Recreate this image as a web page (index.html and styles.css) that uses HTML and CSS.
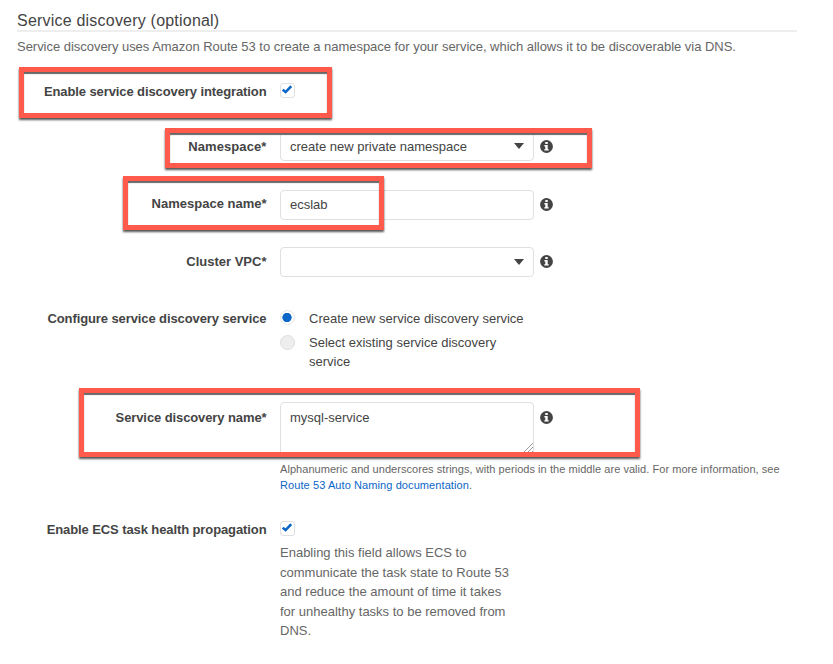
FILE: index.html
```html
<!DOCTYPE html>
<html lang="en">
<head>
<meta charset="utf-8">
<title>Service discovery</title>
<link rel="stylesheet" href="styles.css">
</head>
<body>
<svg class="defs" width="0" height="0" aria-hidden="true">
  <symbol id="info" viewBox="0 0 13 13"><circle cx="6.5" cy="6.5" r="6.4" fill="#444"/><path d="M5.3 2h2.4v2H5.3zM4.4 5.1h3.3v4.1h1v1.4H4.3V9.2h1V6.5h-.9z" fill="#fff"/></symbol>
  <symbol id="check" viewBox="0 0 10 9"><path d="M.7 4.7 3.6 7 9.2 1.2" fill="none" stroke="#0b66c8" stroke-width="2.5"/></symbol>
</svg>
<main class="panel">
  <h2 class="title">Service discovery (optional)</h2>
  <p class="intro">Service discovery uses Amazon Route 53 to create a namespace for your service, which allows it to be discoverable via DNS.</p>

  <div class="row row-enable">
    <div class="label tight">Enable service discovery integration</div>
    <div class="check"><svg><use href="#check"/></svg></div>
    <div class="mark mark-enable"></div>
  </div>
  <div class="row row-namespace">
    <div class="label loose">Namespace*</div>
    <div class="field select"><span>create new private namespace</span><i class="caret"></i></div>
    <svg class="info"><use href="#info"/></svg>
    <div class="mark mark-namespace"></div>
  </div>
  <div class="row row-name">
    <div class="label">Namespace name*</div>
    <div class="field"><span>ecslab</span></div>
    <svg class="info"><use href="#info"/></svg>
    <div class="mark mark-name"></div>
  </div>
  <div class="row row-vpc">
    <div class="label">Cluster VPC*</div>
    <div class="field select"><span></span><i class="caret"></i></div>
    <svg class="info"><use href="#info"/></svg>
  </div>
  <div class="row row-config">
    <div class="label tight">Configure service discovery service</div>
    <div class="options">
      <div class="option"><i class="radio on"></i><span>Create new service discovery service</span></div>
      <div class="option"><i class="radio"></i><span>Select existing service discovery<br>service</span></div>
    </div>
  </div>
  <div class="row row-service">
    <div class="label tight">Service discovery name*</div>
    <div class="field area"><span>mysql-service</span><svg class="grip" viewBox="0 0 12 12"><path d="M1 12 12 1M5 12l7-7M9 12l3-3" stroke="#999" fill="none"/></svg></div>
    <svg class="info"><use href="#info"/></svg>
    <div class="mark mark-service"></div>
  </div>
  <p class="help">Alphanumeric and underscores strings, with periods in the middle are valid. For more information, see<br><span class="docs"><a>Route 53 Auto Naming documentation</a>.</span></p>
  <div class="row row-health">
    <div class="label tight">Enable ECS task health propagation</div>
    <div class="check"><svg><use href="#check"/></svg></div>
  </div>
  <p class="note">Enabling this field allows ECS to<br>communicate the task state to Route 53<br>and reduce the amount of time it takes<br>for unhealthy tasks to be removed from<br>DNS.</p>
</main>
</body>
</html>
```
FILE: styles.css
```css
* { box-sizing: border-box; }
body { margin: 0; background: #fff; color: #444; font: 13px/20px "Liberation Sans", Arial, sans-serif; overflow: hidden; }
.defs { position: absolute; }
.panel { height: 664px; padding: 10px 36px 0 17px; white-space: nowrap; }
.title { margin: 0; height: 22px; padding-top: 1px; border-bottom: 2px solid #eee; font-size: 16px; font-weight: 400; line-height: 20px; letter-spacing: .21px; }
.intro { margin: 5px 0 0; height: 19px; color: #666; letter-spacing: -.03px; }

.row { position: relative; display: grid; grid-template-columns: 249.5px 254px auto; column-gap: 13.5px; justify-content: start; align-items: center; height: 30px; }
.label { text-align: right; font-weight: 700; }
.tight { letter-spacing: -.1px; }
.loose { letter-spacing: .1px; }
.row-enable { margin-top: 20px; }
.row-enable .label, .row-health .label { padding-top: 1px; }
.row-namespace { margin-top: 25px; }
.row-namespace .label, .row-namespace .field span { padding-top: 2px; }
.row-name { margin-top: 29px; }
.row-name .label { padding-bottom: 2px; }
.row-vpc { margin-top: 27px; }
.row-config { margin-top: 32px; height: 63px; align-items: start; }
.row-service { margin-top: 30px; height: 54px; align-items: start; }
.row-service .label { padding-top: 6px; }
.row-service .info { margin-top: 9px; }
.row-health { margin-top: 21px; }

.field { display: flex; align-items: center; justify-content: space-between; height: 30px; padding: 0 9px; border: 1px solid #e0e0e0; border-radius: 4px; }
.area { position: relative; height: 54px; padding-top: 5px; align-items: flex-start; }
.grip { position: absolute; right: 0; bottom: 1px; width: 12px; height: 12px; }
.caret { border: 5px solid transparent; border-top: 6px solid #444; border-bottom: 0; }
.info { width: 13px; height: 13px; margin-left: -7.5px; }
.row-name .info, .row-vpc .info { margin-top: -2px; }
.check { display: flex; align-items: center; justify-content: center; width: 15px; height: 15px; margin-top: -2px; border: 1px solid #e0e0e0; border-radius: 3px; }
.check svg { width: 10px; height: 9px; margin: -1px 0 0 -1px; }
.options { display: grid; gap: 4px; }
.option { display: flex; gap: 14px; line-height: 19.5px; }
.radio { flex: none; width: 15px; height: 15px; margin-top: 2px; border: 1px solid #ddd; border-radius: 50%; background: #eee; }
.radio.on { margin-top: 1px; border-color: #e4e4e4; background: radial-gradient(circle at 6px 6.5px, #0b66c8 4.3px, #fff 5px); }

.help { margin: 5px 0 0 263px; height: 32px; font-size: 11px; line-height: 16px; color: #666; letter-spacing: .05px; }
.docs { letter-spacing: .09px; }
a { color: #0b66c8; }
.note { margin: -1px 0 0 263px; color: #666; line-height: 19.5px; }

.mark { position: absolute; border: 5px solid #ff5a4b; box-shadow: 0 2px 2px #555, inset 0 2px 1px #666; }
.mark-enable { left: 2px; top: -9px; width: 313px; height: 51px; }
.mark-namespace { left: 148px; top: -3px; width: 427px; height: 40px; }
.mark-name { left: 106px; top: -14px; width: 261px; height: 54px; }
.mark-service { left: 62px; top: -14px; width: 561px; height: 69px; }
```
